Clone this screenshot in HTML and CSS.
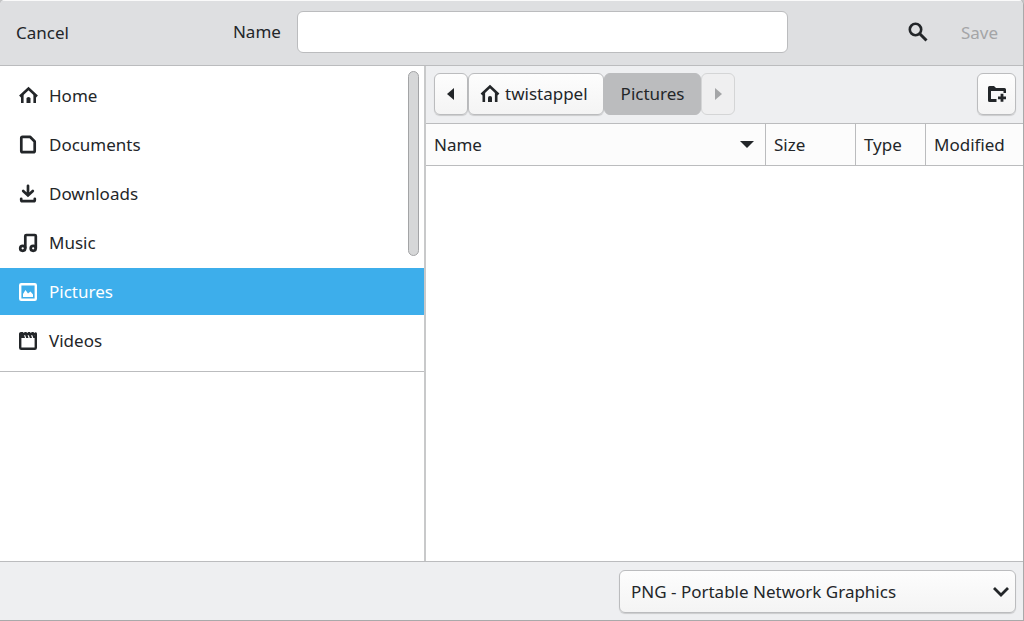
FILE: index.html
```html
<!DOCTYPE html>
<html lang="en">
<head>
    <meta charset="UTF-8">
    <meta name="viewport" content="width=device-width, initial-scale=1.0">
    <title>Save File</title>
    <link rel="stylesheet" href="styles.css">
</head>
<body>
    <form class="dialog">
        <header class="titlebar">
            <button type="button" class="flat cancel">Cancel</button>
            <label for="filename">Name</label>
            <input type="text" id="filename" class="filename">
            <button type="button" class="flat search" aria-label="Search">
                <svg width="20" height="20" viewBox="0 0 20 20" fill="none" stroke="currentColor">
                    <circle cx="7.5" cy="7.5" r="5.7" stroke-width="2.6"/>
                    <path d="M11.5 11.5l7 7" stroke-width="3"/>
                </svg>
            </button>
            <button type="submit" class="flat save" disabled>Save</button>
        </header>

        <main class="content">
            <!-- Places sidebar -->
            <aside class="sidebar">
                <nav class="places">
                    <a href="#home" class="place">
                        <svg width="20" height="20" viewBox="0 0 20 20" fill="none" stroke="currentColor">
                            <path d="M2 10.500L10.500 2.500l8.500 8" stroke-width="2.600"/>
                            <path d="M4.300 8.500V17M16.700 8.500V17" stroke-width="2.600"/>
                            <path d="M8.500 17v-4.500q0-1.500 2-1.500t2 1.500V17z" fill="currentColor" stroke="none"/>
                        </svg>
                        Home
                    </a>
                    <a href="#documents" class="place">
                        <svg width="20" height="20" viewBox="0 0 20 20" fill="none" stroke="currentColor">
                            <path d="M4.500 1.800H12l4.700 4.700v9.200q0 1.500-1.500 1.500H4.800q-1.500 0-1.500-1.500V3.300q0-1.500 1.200-1.500z" stroke-width="2.700" stroke-linejoin="round"/>
                        </svg>
                        Documents
                    </a>
                    <a href="#downloads" class="place">
                        <svg width="20" height="20" viewBox="0 0 20 20" fill="none" stroke="currentColor" stroke-width="2.700" stroke-linecap="round">
                            <path d="M10 1.800v9.500M5.200 7l4.800 4.500L14.800 7"/>
                            <path d="M3.200 14.800v1.200q0 1.200 1.200 1.200h11.200q1.200 0 1.200-1.200v-1.200" stroke-linejoin="round"/>
                        </svg>
                        Downloads
                    </a>
                    <a href="#music" class="place">
                        <svg width="20" height="20" viewBox="0 0 20 20" fill="none" stroke="currentColor" stroke-width="2.700">
                            <path d="M7.300 15.500V3q0-1 1-1h8.500q1 0 1 1v12.500" stroke-linejoin="round"/>
                            <circle cx="4.700" cy="15.300" r="2.500"/>
                            <circle cx="15.200" cy="15.300" r="2.500"/>
                        </svg>
                        Music
                    </a>
                    <a href="#pictures" class="place selected" aria-current="page">
                        <svg width="20" height="20" viewBox="0 0 20 20" fill="none" stroke="currentColor">
                            <rect x="2.200" y="2.200" width="15.600" height="15.600" rx="1" stroke-width="2.400"/>
                            <path d="M5 15v-3l2.500-4 2.500 3.500 2.500-2 2.500 3V15z" fill="currentColor" stroke="none"/>
                        </svg>
                        Pictures
                    </a>
                    <a href="#videos" class="place">
                        <svg width="20" height="20" viewBox="0 0 20 20" fill="none" stroke="currentColor">
                            <rect x="2.200" y="3" width="15.600" height="14.800" rx="1" stroke-width="2.400"/>
                            <path d="M1 3q0-2 2-2h2l2 6H1zM6.200 1h2.300l2 6H8.200zM9.800 1H12l2 6h-2.200zM13.300 1h2.300l2 6h-2.300zM17 1q2 0 2 2v4z" fill="currentColor" stroke="none"/>
                        </svg>
                        Videos
                    </a>
                    <div class="scroll-thumb"></div>
                </nav>
            </aside>

            <section class="browser">
                <div class="pathbar">
                    <button type="button" class="btn arrow" aria-label="Back">
                        <svg width="8" height="14" viewBox="0 0 8 14" fill="currentColor"><path d="M7 1v12L0 7z"/></svg>
                    </button>
                    <button type="button" class="btn home">
                        <svg width="20" height="20" viewBox="0 0 20 20" fill="none" stroke="currentColor">
                            <path d="M1.500 10.500L10 2.500l8.500 8" stroke-width="2.600"/>
                            <path d="M3.800 8.500V18M16.200 8.500V18" stroke-width="2.600"/>
                            <path d="M8 18v-4.500q0-1.500 2-1.500t2 1.500V18z" fill="currentColor" stroke="none"/>
                        </svg>
                        twistappel
                    </button>
                    <button type="button" class="btn active">Pictures</button>
                    <button type="button" class="btn arrow" aria-label="Forward" disabled>
                        <svg width="8" height="14" viewBox="0 0 8 14" fill="currentColor"><path d="M1 1v12l7-6z"/></svg>
                    </button>
                    <button type="button" class="btn new-folder" aria-label="Create folder">
                        <svg width="20" height="20" viewBox="0 0 20 20" fill="none" stroke="currentColor">
                            <path d="M9.500 16.500H2.500V4" stroke-width="3" stroke-linejoin="round"/>
                            <path d="M1 3.500Q1 2 2.500 2H7l2 2h8.500Q19 4 19 5.500V9h-2.500V7H1z" fill="currentColor" stroke="none"/>
                            <path d="M15 9.800v8M11 13.800h8" stroke-width="2.800"/>
                        </svg>
                    </button>
                </div>
                <table class="files">
                    <thead>
                        <tr>
                            <th class="col-name">
                                <div class="sorted">
                                    Name
                                    <svg width="14" height="8" viewBox="0 0 14 8" fill="currentColor"><path d="M0 0h14L7 7z"/></svg>
                                </div>
                            </th>
                            <th class="col-size">Size</th>
                            <th class="col-type">Type</th>
                            <th class="col-modified">Modified</th>
                        </tr>
                    </thead>
                    <tbody></tbody>
                </table>
            </section>
        </main>

        <footer class="actionbar">
            <div class="format">
                <select class="format-select" aria-label="File type">
                    <option>PNG - Portable Network Graphics</option>
                </select>
                <svg class="chevron" width="16" height="12" viewBox="0 0 16 12" fill="none" stroke="currentColor" stroke-width="2.800"><path d="M1 2l7 7 7-7"/></svg>
            </div>
        </footer>
    </form>
</body>
</html>
```
FILE: styles.css
```css
* {
    box-sizing: border-box;
}

body {
    margin: 0;
    background-color: #c4c5c6;
    color: #232629;
    font-family: "Noto Sans", sans-serif;
    font-size: 17px;
    line-height: 24px;
}

button, input, select {
    font: inherit;
    color: inherit;
}

svg {
    display: block;
    flex: none;
}

.dialog {
    display: flex;
    flex-direction: column;
    height: 100vh;
    overflow: hidden;
    background-color: #eeeff1;
    border-right: 1px solid #a9a9aa;
    border-bottom: 1px solid #a9a9aa;
    border-radius: 5px 5px 0 0;
}

/* Title bar */
.titlebar {
    display: flex;
    align-items: center;
    height: 66px;
    padding: 0 9px 0 8px;
    background-color: #dedfe1;
    border-top: 1px solid #fafafa;
    border-bottom: 1px solid #bbbcbe;
}

.titlebar label {
    margin: 0 16px 2px auto;
}

.filename {
    flex: 0 1 491px;
    min-width: 0;
    height: 42px;
    margin-bottom: 3px;
    padding: 0 10px;
    background-color: #fff;
    border: 1px solid #bbbcbe;
    border-radius: 6px;
}

.flat {
    padding: 8px;
    background: none;
    border: 0;
}

.search {
    margin: 0 9px 2px 112px;
}

.save {
    padding: 8px 16px;
}

.save:disabled {
    color: #a4a5a7;
}

/* Main area */
.content {
    display: flex;
    flex: 1;
    min-height: 0;
}

.sidebar {
    flex: 0 0 426px;
    background-color: #fff;
    border-right: 2px solid #c8c9ca;
}

.places {
    position: relative;
    display: flex;
    flex-direction: column;
    gap: 2px;
    padding: 6px 0 7px;
    border-bottom: 1px solid #bbbcbe;
}

.place {
    display: flex;
    align-items: center;
    gap: 11px;
    height: 47px;
    padding: 0 18px;
    color: inherit;
    text-decoration: none;
}

.place.selected {
    background-color: #3daeeb;
    color: #fff;
}

.scroll-thumb {
    position: absolute;
    top: 5px;
    right: 5px;
    width: 11px;
    height: 185px;
    background-color: #d6d7d8;
    border: 1px solid #a3a4a6;
    border-radius: 6px;
}

.browser {
    flex: 1;
    min-width: 0;
    background-color: #fff;
}

.pathbar {
    display: flex;
    align-items: center;
    height: 57px;
    padding: 0 7px 2px 8px;
    background-color: #eeeff1;
}

.btn {
    display: flex;
    align-items: center;
    justify-content: center;
    gap: 5px;
    height: 42px;
    padding: 0 12px;
    background: linear-gradient(#fdfdfd, #f4f4f4);
    border: 1px solid #bbbcbe;
    border-radius: 6px;
    box-shadow: 0 1px 1px rgba(0, 0, 0, 0.15);
}

.btn.arrow {
    width: 34px;
    padding: 0;
}

.btn.home {
    padding: 0 15px 0 11px;
}

.btn.active {
    padding: 0 16px;
    background: #bbbcbe;
    box-shadow: none;
}

.btn:disabled {
    background: #efeff0;
    border-color: #d4d5d6;
    color: #a4a5a7;
    box-shadow: none;
}

.btn.new-folder {
    width: 39px;
    margin-left: auto;
    padding: 0;
}

/* File list */
.files {
    width: 100%;
    table-layout: fixed;
    border-collapse: separate;
    border-spacing: 0;
}

.files th {
    height: 43px;
    padding: 0 8px;
    background-color: #fcfcfc;
    border: solid #bbbcbe;
    border-width: 1px 1px 1px 0;
    font-weight: normal;
    text-align: left;
}

.files th:last-child {
    border-right: 0;
}

.sorted {
    display: flex;
    align-items: center;
    justify-content: space-between;
    padding-right: 3px;
}

.col-size {
    width: 90px;
}

.col-type {
    width: 70px;
}

.col-modified {
    width: 97px;
}

/* Footer */
.actionbar {
    display: flex;
    justify-content: flex-end;
    padding: 8px 7px 7px;
    border-top: 1px solid #bbbcbe;
}

.format {
    position: relative;
    width: 397px;
}

.format-select {
    display: block;
    width: 100%;
    height: 43px;
    padding: 0 36px 0 11px;
    appearance: none;
    background: linear-gradient(#fdfdfd, #f4f4f4);
    border: 1px solid #bbbcbe;
    border-radius: 6px;
    box-shadow: 0 1px 1px rgba(0, 0, 0, 0.15);
}

.chevron {
    position: absolute;
    top: 16px;
    right: 7px;
    pointer-events: none;
}
```
